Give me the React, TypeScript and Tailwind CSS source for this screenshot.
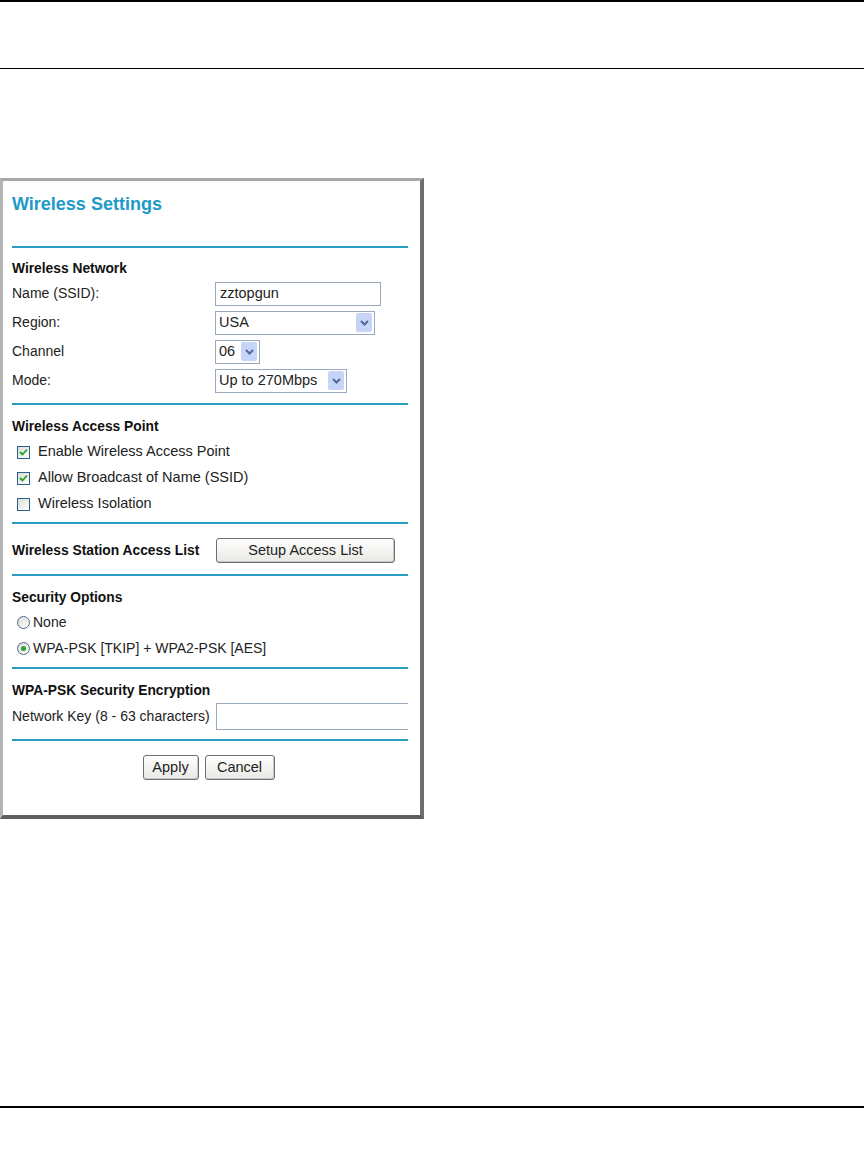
import React from 'react';

function Chevron() {
  return (
    <svg width="9" height="6" viewBox="0 0 9 6" className="block">
      <path d="M1 1l3.5 3.5L8 1" fill="none" stroke="#4d6a9c" strokeWidth="2" />
    </svg>
  );
}

function Select({ value, width }: { value: string; width: string }) {
  return (
    <div className={`flex h-[24px] items-center border border-[#9aa9bd] bg-white pl-[3px] pr-[2px] ${width}`}>
      <span className="flex-1 truncate text-[14.5px] text-[#222]">{value}</span>
      <span className="flex h-[19px] w-[16px] items-center justify-center rounded-[2px] bg-[#c6d5f7]">
        <Chevron />
      </span>
    </div>
  );
}

function Checkbox({ checked, label }: { checked: boolean; label: string }) {
  return (
    <div className="flex h-[26px] items-center pl-[5px]">
      <span className="flex h-[13px] w-[13px] items-center justify-center border border-[#2c5f8a] bg-gradient-to-br from-[#dcdcd7] to-white">
        {checked && (
          <svg width="9" height="8" viewBox="0 0 9 8">
            <path d="M1 4l2.5 2.5L8 1.5" fill="none" stroke="#21a121" strokeWidth="1.8" />
          </svg>
        )}
      </span>
      <span className="ml-[8px] text-[14.5px] text-[#222]">{label}</span>
    </div>
  );
}

function Radio({ checked, label }: { checked: boolean; label: string }) {
  return (
    <div className="flex h-[26px] items-center pl-[5px]">
      <span className="flex h-[13px] w-[13px] items-center justify-center rounded-full border border-[#4b6a8c] bg-gradient-to-br from-[#dcdcd7] to-white">
        {checked && <span className="h-[5px] w-[5px] rounded-full bg-[#2fa12f]" />}
      </span>
      <span className="ml-[3px] text-[14px] text-[#222]">{label}</span>
    </div>
  );
}

function Button({ children, className }: { children: React.ReactNode; className: string }) {
  return (
    <div
      className={`flex h-[25px] items-center justify-center rounded-[3px] border border-[#6f6f6f] bg-gradient-to-b from-white to-[#e8e8e4] text-[14.5px] text-[#222] shadow-[inset_-1px_-1px_0_#c8c8c2] ${className}`}
    >
      {children}
    </div>
  );
}

const Rule = ({ className }: { className: string }) => <div className={`h-[2px] bg-[#2a9bc3] ${className}`} />;

const Heading = ({ children, className }: { children: React.ReactNode; className: string }) => (
  <div className={`flex h-[20px] items-center text-[13.8px] font-bold text-[#111] ${className}`}>{children}</div>
);

export default function App() {
  return (
    <div className="flex min-h-[1170px] w-[864px] flex-col bg-white font-['Liberation_Sans',Arial,sans-serif]">
      <div className="h-[69px] border-t-2 border-b border-black" />

      <div className="mt-[109px] w-[424px] border-[3px] border-t-[#a8a8a8] border-l-[#b4b4b4] border-r-[4px] border-r-[#6e6e6e] border-b-[4px] border-b-[#5f5f5f] bg-white pl-[9px] pr-[12px] pb-[35px]">
        <div className="mt-[13px] flex h-[20px] items-center text-[18px] font-bold text-[#1e9ac8]">Wireless Settings</div>
        <Rule className="mt-[32px]" />

        <Heading className="mt-[11px]">Wireless Network</Heading>
        <div className="grid grid-cols-[203px_1fr] text-[14px] text-[#222]">
          <div className="flex h-[29px] items-center">Name (SSID):</div>
          <div className="flex h-[29px] items-center">
            <div className="flex h-[24px] w-[166px] items-center border border-[#9aa9bd] pl-[4px] text-[14.5px]">zztopgun</div>
          </div>
          <div className="flex h-[29px] items-center">Region:</div>
          <div className="flex h-[29px] items-center">
            <Select value="USA" width="w-[160px]" />
          </div>
          <div className="flex h-[29px] items-center">Channel</div>
          <div className="flex h-[29px] items-center">
            <Select value="06" width="w-[45px]" />
          </div>
          <div className="flex h-[29px] items-center">Mode:</div>
          <div className="flex h-[29px] items-center">
            <Select value="Up to 270Mbps" width="w-[132px]" />
          </div>
        </div>
        <Rule className="mt-[8px]" />

        <Heading className="mt-[12px]">Wireless Access Point</Heading>
        <div className="mt-[2px]">
          <Checkbox checked label="Enable Wireless Access Point" />
          <Checkbox checked label="Allow Broadcast of Name (SSID)" />
          <Checkbox checked={false} label="Wireless Isolation" />
        </div>
        <Rule className="mt-[5px]" />

        <div className="mt-[8px] grid h-[37px] grid-cols-[204px_1fr] items-center">
          <div className="pt-[1px] text-[13.8px] font-bold text-[#111]">Wireless Station Access List</div>
          <Button className="w-[179px]">Setup Access List</Button>
        </div>
        <Rule className="mt-[5px]" />

        <Heading className="mt-[12px]">Security Options</Heading>
        <div className="mt-[1px]">
          <Radio checked={false} label="None" />
          <Radio checked label="WPA-PSK [TKIP] + WPA2-PSK [AES]" />
        </div>
        <Rule className="mt-[6px]" />

        <Heading className="mt-[12px]">WPA-PSK Security Encryption</Heading>
        <div className="mt-[1px] flex h-[28px] items-center text-[14px] text-[#222]">
          <span className="w-[204px]">Network Key (8 - 63 characters)</span>
          <div className="h-[27px] flex-1 border border-r-0 border-[#9aa9bd]" />
        </div>
        <Rule className="mt-[9px]" />

        <div className="mt-[14px] flex justify-center gap-[6px] pr-[3px]">
          <Button className="w-[56px]">Apply</Button>
          <Button className="w-[70px]">Cancel</Button>
        </div>
      </div>

      <div className="mt-[287px] border-t-2 border-black" />
    </div>
  );
}
